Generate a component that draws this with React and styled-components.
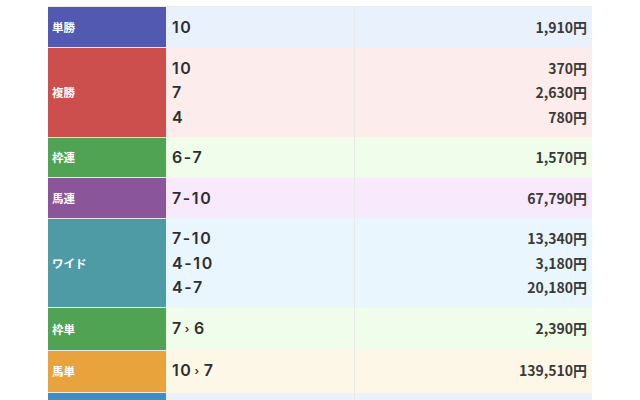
import React from "react";
import styled, { createGlobalStyle } from "styled-components";

const Global = createGlobalStyle`
  html, body { margin: 0; padding: 0; background: #fff; overflow: hidden; }
  body { font-family: "Noto Sans CJK JP", "Noto Sans", sans-serif; color: #333; }
`;

const Page = styled.div`
  padding: 6px 0 0 48px;
`;

const Table = styled.table`
  width: 544px;
  border-collapse: collapse;
  table-layout: fixed;
  border-top: 1px solid #ececec;
`;

const Row = styled.tr`
  background: ${(p) => p.$bg};
  & + & td, & + & th { border-top: 1px solid #ececec; }
`;

const Label = styled.th`
  width: 118px;
  background: ${(p) => p.$color};
  color: #fff;
  font-size: 11.5px;
  font-weight: 700;
  text-align: left;
  padding: 0 4px;
  vertical-align: middle;
  box-sizing: border-box;
  border-top: 1px solid #e8e8e8;
`;

const Combo = styled.td`
  width: 188px;
  padding: 8px 6px;
  box-sizing: border-box;
  font-family: "Inter", "Noto Sans", sans-serif;
  font-weight: 600;
  font-size: 16px;
  line-height: 24.5px;
  letter-spacing: 0.1em;
  color: #2e2e2e;
  border-right: 1px solid #e9e9e9;
  vertical-align: top;
`;

const Pay = styled.td`
  padding: 8px 5px;
  text-align: right;
  font-family: "Noto Sans CJK JP", sans-serif;
  font-weight: 700;
  font-size: 14px;
  line-height: 24.5px;
  color: #3a3a3a;
  vertical-align: top;
`;

const Line = styled.div``;

const Arrow = styled.span`
  font-size: 11px;
  margin: 0 3px 0 2px;
  position: relative;
  top: -1px;
`;

const Filler = styled.div`
  height: 24px;
`;

const rows = [
  { label: "単勝", color: "#5159b0", bg: "#e9f1fd", combos: ["10"], pays: ["1,910円"] },
  { label: "複勝", color: "#cd4f4d", bg: "#fdecec", combos: ["10", "7", "4"], pays: ["370円", "2,630円", "780円"] },
  { label: "枠連", color: "#4fa353", bg: "#f0fdea", combos: ["6-7"], pays: ["1,570円"] },
  { label: "馬連", color: "#8a5699", bg: "#f8e9fc", combos: ["7-10"], pays: ["67,790円"] },
  { label: "ワイド", color: "#4e9ba6", bg: "#e9f6fd", combos: ["7-10", "4-10", "4-7"], pays: ["13,340円", "3,180円", "20,180円"] },
  { label: "枠単", color: "#4fa353", bg: "#f0fdea", combos: [["7", "6"]], pays: ["2,390円"] },
  { label: "馬単", color: "#e8a33c", bg: "#fdf7e7", combos: [["10", "7"]], pays: ["139,510円"] },
  { label: "", color: "#3f8dc2", bg: "#eaf3fd", combos: [], pays: [], filler: true },
];

export default function App() {
  return (
    <Page>
      <Global />
      <Table>
        <tbody>
          {rows.map((r, idx) => (
            <Row key={idx} $bg={r.bg}>
              <Label $color={r.color}>{r.label}</Label>
              <Combo>
                {r.filler && <Filler />}
                {r.combos.map((c, i) => (
                  <Line key={i}>
                    {Array.isArray(c) ? (
                      <>
                        {c[0]}
                        <Arrow>›</Arrow>
                        {c[1]}
                      </>
                    ) : (
                      c
                    )}
                  </Line>
                ))}
              </Combo>
              <Pay>
                {r.pays.map((p, i) => (
                  <Line key={i}>{p}</Line>
                ))}
              </Pay>
            </Row>
          ))}
        </tbody>
      </Table>
    </Page>
  );
}
